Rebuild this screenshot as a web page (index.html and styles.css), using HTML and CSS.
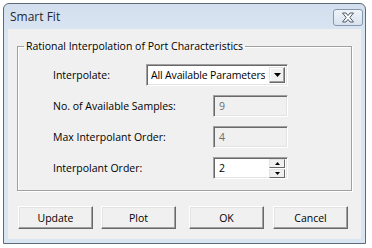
FILE: index.html
```html
<!DOCTYPE html>
<html lang="en">
<head>
    <meta charset="UTF-8">
    <title>Smart Fit</title>
    <link rel="stylesheet" href="styles.css">
</head>
<body>
    <div class="window">
        <div class="titlebar">
            <span class="title">Smart Fit</span>
            <button class="close-btn">
                <svg width="14" height="11" viewBox="0 0 14 11">
                    <path d="M1.5 1 h3.5 l2 2.6 l2 -2.6 h3.5 l-3.7 4.5 l3.7 4.5 h-3.5 l-2 -2.6 l-2 2.6 h-3.5 l3.7 -4.5 z" fill="#fff" stroke="#4e5866" stroke-width="1" stroke-linejoin="round"/>
                </svg>
            </button>
        </div>

        <div class="client">
            <fieldset class="group">
                <legend>Rational Interpolation of Port Characteristics</legend>
                <div class="form-grid">
                    <label>Interpolate:</label>
                    <div class="combo">
                        <span class="combo-text">All Available Parameters</span>
                        <span class="combo-drop">
                            <svg width="7" height="4" viewBox="0 0 7 4"><path d="M0 0 H7 L3.5 4 Z" fill="#000"/></svg>
                        </span>
                    </div>

                    <label>No. of Available Samples:</label>
                    <div class="field disabled">9</div>

                    <label>Max Interpolant Order:</label>
                    <div class="field disabled">4</div>

                    <label>Interpolant Order:</label>
                    <div class="field spin">
                        <span>2</span>
                        <span class="spinner">
                            <span class="spin-btn"><svg width="5" height="3" viewBox="0 0 5 3"><path d="M2.5 0 L5 3 H0 Z" fill="#000"/></svg></span>
                            <span class="spin-btn"><svg width="5" height="3" viewBox="0 0 5 3"><path d="M0 0 H5 L2.5 3 Z" fill="#000"/></svg></span>
                        </span>
                    </div>
                </div>
            </fieldset>

            <div class="buttons">
                <div class="btn-group">
                    <button class="btn">Update</button>
                    <button class="btn">Plot</button>
                </div>
                <div class="btn-group right">
                    <button class="btn">OK</button>
                    <button class="btn">Cancel</button>
                </div>
            </div>
        </div>
    </div>
</body>
</html>
```

FILE: styles.css
```css
body { margin: 0; background: #fff; font-family: "Open Sans", "Noto Sans", sans-serif; font-size: 10.5px; color: #000; }

.window { margin: 3px 0 0 3px; width: 361px; height: 239px; border: 1px solid #5f6a78; border-radius: 6px 6px 0 0; background: linear-gradient(#d3dfee, #dae5f2 30px, #dae5f2); display: flex; flex-direction: column; }

.titlebar { height: 25px; display: flex; align-items: center; justify-content: space-between; padding: 0 2px 0 6px; }
.title { font-size: 12px; color: #1e2733; }
.close-btn { width: 30px; height: 17px; margin-top: 2px; padding: 0; border: 1px solid #8797ae; border-radius: 3px; background: linear-gradient(#eef3f9, #d8e2ee); display: flex; align-items: center; justify-content: center; }

.client { flex: 1; margin: 0 4px 4px 4px; background: #f0f0f0; padding: 10px 10px 0 9px; }

.group { margin: 0; width: 327px; padding: 10px 0 11px 6px; border: 1px solid #a0a0a0; box-shadow: 1px 1px 0 #fff, inset 1px 1px 0 #fff; }
.group legend { padding: 0 2px; line-height: 15px; }

.form-grid { margin-left: 29px; width: 235px; display: grid; grid-template-columns: minmax(0, 1fr) auto; align-items: center; justify-items: end; row-gap: 9px; }
.form-grid label { justify-self: start; line-height: 22px; white-space: nowrap; }

.combo { width: 134px; height: 18px; display: flex; align-items: center; justify-content: space-between; background: #fff; border: 1px solid; border-color: #a0a0a0 #fff #fff #a0a0a0; box-shadow: inset 1px 1px 0 #696969, inset -1px -1px 0 #e3e3e3; padding: 1px 2px 1px 4px; }
.combo-text { white-space: nowrap; overflow: hidden; letter-spacing: -0.15px; }
.combo-drop { flex: none; width: 14px; height: 14px; display: flex; align-items: center; justify-content: center; background: #f0f0f0; border: 1px solid; border-color: #e3e3e3 #696969 #696969 #e3e3e3; box-shadow: inset -1px -1px 0 #a0a0a0, inset 1px 1px 0 #fff; }

.field { width: 68px; height: 20px; line-height: 20px; padding-left: 5px; border: 1px solid; border-color: #a0a0a0 #fff #fff #a0a0a0; box-shadow: inset 1px 1px 0 #696969, inset -1px -1px 0 #e3e3e3; background: #fff; }
.field.disabled { background: #f0f0f0; color: #6d6d6d; }
.field.spin { display: flex; justify-content: space-between; align-items: center; padding-right: 2px; width: 66px; }
.spinner { display: flex; flex-direction: column; gap: 1px; }
.spin-btn { width: 14px; height: 7px; display: flex; align-items: center; justify-content: center; background: #f0f0f0; border: 1px solid; border-color: #e3e3e3 #696969 #696969 #e3e3e3; }

.buttons { margin: 15px 0 0 1px; width: 330px; display: flex; justify-content: space-between; }
.btn-group { display: flex; gap: 8px; }
.btn-group.right { gap: 9px; }
.btn { width: 75px; height: 23px; padding: 0; font-family: inherit; font-size: 10.5px; color: #000; background: #f0f0f0; border: 1px solid; border-color: #fff #696969 #696969 #fff; box-shadow: inset -1px -1px 0 #a0a0a0, inset 1px 1px 0 #e3e3e3; }
```
